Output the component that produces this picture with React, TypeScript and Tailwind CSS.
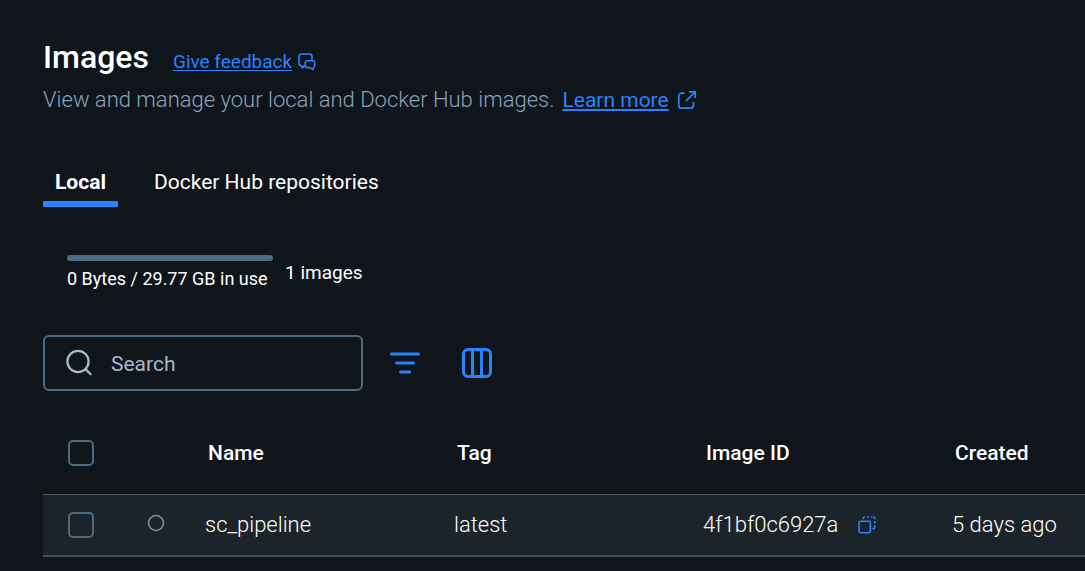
const columns = ['Name', 'Tag', 'Image ID', 'Created'];

function FeedbackIcon() {
  return (
    <svg width="18" height="18" viewBox="0 0 18 18" fill="none" stroke="currentColor" strokeWidth="1.6" strokeLinejoin="round" aria-hidden="true">
      <path d="M6.6 12.6L4.6 15L3.4 12.6H3.2A2.2 2.2 0 0 1 1 10.4V3.4A2.4 2.4 0 0 1 3.4 1H11.6A2.4 2.4 0 0 1 14 3.4V7.4" />
      <path d="M9.2 7.8H14.6A2 2 0 0 1 16.6 9.8V12.6A2 2 0 0 1 15.6 14.4L15 16.6L12 14.6H9.2A2 2 0 0 1 7.2 12.6V9.8A2 2 0 0 1 9.2 7.8Z" />
    </svg>
  );
}

function ExternalIcon() {
  return (
    <svg width="20" height="20" viewBox="0 0 20 20" fill="none" stroke="currentColor" strokeWidth="1.7" aria-hidden="true">
      <path d="M7.5 3.2H4.6A2.8 2.8 0 0 0 1.8 6V15.4A2.8 2.8 0 0 0 4.6 18.2H13.6A2.8 2.8 0 0 0 16.4 15.4V12" />
      <path d="M8.8 11.2L18 2M12 1.8H18.2V8" />
    </svg>
  );
}

function CopyIcon() {
  return (
    <svg width="18" height="18" viewBox="0 0 18 18" fill="none" stroke="currentColor" strokeWidth="1.6" aria-hidden="true">
      <rect x="1" y="5.3" width="11.4" height="11.4" rx="1.6" />
      <path d="M5.3 3V2.5A1.6 1.6 0 0 1 6.9 1M8.8 1H11M12.7 1H14.6M15.4 1A1.4 1.4 0 0 1 16.8 2.4V3.2M16.8 5V7.4M16.8 9.2V11.2A1.4 1.4 0 0 1 15.4 12.6H14.4" />
    </svg>
  );
}

function SearchIcon() {
  return (
    <svg width="28" height="28" viewBox="0 0 28 28" fill="none" stroke="currentColor" strokeWidth="2.3" strokeLinecap="round" aria-hidden="true">
      <circle cx="13" cy="12.5" r="10.6" />
      <path d="M20.5 20L25.6 25.2" />
    </svg>
  );
}

function FilterIcon() {
  return (
    <svg width="32" height="32" viewBox="0 0 32 32" fill="none" stroke="currentColor" strokeWidth="3" strokeLinecap="round" aria-hidden="true">
      <path d="M2.5 7H29.5M7.5 16H24.5M11.5 25H20.5" />
    </svg>
  );
}

function ColumnsIcon() {
  return (
    <svg width="32" height="32" viewBox="0 0 32 32" fill="none" stroke="currentColor" strokeWidth="3" aria-hidden="true">
      <rect x="2.5" y="2.5" width="27" height="27" rx="4.5" />
      <path d="M11.5 2.5V29.5M20.5 2.5V29.5" />
    </svg>
  );
}

function Checkbox({ label }: { label: string }) {
  return (
    <input
      type="checkbox"
      aria-label={label}
      className="block size-[26px] appearance-none rounded-[5px] border-2 border-[#4c6a82] checked:bg-[#2684ff]"
    />
  );
}

export default function App() {
  return (
    <main className="min-h-screen overflow-x-hidden bg-[#10151b] pt-9 pb-4 pl-[43px] font-['Roboto',sans-serif] text-white">
      <header>
        <div className="flex items-baseline gap-6">
          <h1 className="text-[32px] leading-[42px] font-medium">Images</h1>
          <a href="#feedback" className="flex items-center gap-1.5 text-[19px] leading-6 text-[#2684ff]">
            <span className="underline underline-offset-2">Give feedback</span>
            <FeedbackIcon />
          </a>
        </div>
        <p className="mt-2 flex items-center gap-2 text-[22px] leading-7 text-[#86a3ba]">
          <span className="font-light">View and manage your local and Docker Hub images.</span>
          <a href="#learn" className="flex items-center gap-2 text-[#2684ff]">
            <span className="text-[21px] underline decoration-2 underline-offset-2">Learn more</span>
            <ExternalIcon />
          </a>
        </p>
      </header>

      <div role="tablist" className="mt-[45px] flex gap-6 text-[21px] leading-[30px]">
        <button role="tab" aria-selected="true" className="border-b-6 border-[#2684ff] px-3 pt-2 pb-1 font-bold">
          Local
        </button>
        <button role="tab" aria-selected="false" className="border-b-6 border-transparent px-3 pt-2 pb-1">
          Docker Hub repositories
        </button>
      </div>

      <section className="mt-12 flex items-center gap-3 pl-6 text-[19px]">
        <div className="min-w-[206px]">
          <div role="progressbar" aria-label="Disk usage" aria-valuenow={0} className="h-1.5 rounded-full bg-[#4c6a82]" />
          <p className="mt-1.5 text-lg leading-6">0 Bytes / 29.77 GB in use</p>
        </div>
        <p className="leading-6">1 images</p>
      </section>

      <div className="mt-11 flex items-center">
        <label className="flex h-14 w-80 items-center gap-[18px] rounded-md border-2 border-[#4c6a82] px-5 text-[#a6b9c8]">
          <SearchIcon />
          <input
            type="text"
            aria-label="Search"
            placeholder="Search"
            className="min-w-0 flex-1 bg-transparent pt-1 text-[21px] outline-none placeholder:text-[#a6b9c8]"
          />
        </label>
        <button aria-label="Filter" className="ml-[26px] text-[#2684ff]">
          <FilterIcon />
        </button>
        <button aria-label="Columns" className="ml-10 text-[#2684ff]">
          <ColumnsIcon />
        </button>
      </div>

      <table className="mt-[21px] w-full table-fixed border-collapse text-left">
        <colgroup>
          <col className="w-[75px]" />
          <col className="w-[75px]" />
          <col className="w-[249px]" />
          <col className="w-[249px]" />
          <col className="w-[249px]" />
          <col />
        </colgroup>
        <thead>
          <tr className="h-[82px] text-[21px]">
            <th className="pl-[25px]">
              <Checkbox label="Select all images" />
            </th>
            <th aria-label="Status" />
            {columns.map((name) => (
              <th key={name} className="pt-0.5 pl-[15px] font-medium whitespace-nowrap">
                {name}
              </th>
            ))}
          </tr>
        </thead>
        <tbody>
          <tr className="h-[62px] border-t border-b-2 border-t-[#515352] border-b-[#3d5059] bg-[#1c2329] text-[22px] font-light">
            <td className="pl-[25px]">
              <Checkbox label="Select sc_pipeline" />
            </td>
            <td>
              <svg width="18" height="18" viewBox="0 0 18 18" fill="none" stroke="#7794ab" strokeWidth="1.5" className="mb-1 ml-[29px]" role="img" aria-label="Unused">
                <circle cx="9" cy="9" r="7.5" />
              </svg>
            </td>
            <td className="pl-3">sc_pipeline</td>
            <td className="pl-3">latest</td>
            <td className="pl-3">
              <div className="flex items-center gap-5">
                <span>4f1bf0c6927a</span>
                <button aria-label="Copy image ID" className="text-[#2684ff]">
                  <CopyIcon />
                </button>
              </div>
            </td>
            <td className="pl-3 whitespace-nowrap">5 days ago</td>
          </tr>
        </tbody>
      </table>
    </main>
  );
}
